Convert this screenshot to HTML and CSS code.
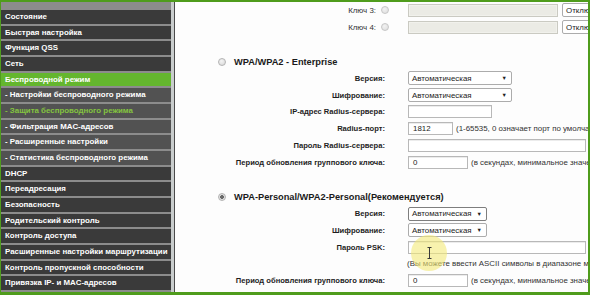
FILE: index.html
```html
<!DOCTYPE html>
<html lang="ru">
<head>
<meta charset="utf-8">
<title>Защита беспроводного режима</title>
<link rel="stylesheet" href="styles.css">
</head>
<body>
<div class="frame">
  <nav class="menu">
    <div class="item">Состояние</div>
    <div class="item">Быстрая настройка</div>
    <div class="item">Функция QSS</div>
    <div class="item">Сеть</div>
    <div class="item active">Беспроводной режим</div>
    <div class="item sub">- Настройки беспроводного режима</div>
    <div class="item sub current">- Защита беспроводного режима</div>
    <div class="item sub">- Фильтрация MAC-адресов</div>
    <div class="item sub">- Расширенные настройки</div>
    <div class="item sub">- Статистика беспроводного режима</div>
    <div class="item">DHCP</div>
    <div class="item">Переадресация</div>
    <div class="item">Безопасность</div>
    <div class="item">Родительский контроль</div>
    <div class="item">Контроль доступа</div>
    <div class="item">Расширенные настройки маршрутизации</div>
    <div class="item">Контроль пропускной способности</div>
    <div class="item">Привязка IP- и MAC-адресов</div>
    <div class="item">Динамический DNS</div>
  </nav>
  <div class="divider"></div>
  <main class="content">
    <section class="block">
      <div class="row">
        <div class="label key">Ключ 3: <span class="radio off"></span></div>
        <div class="field"><span class="input disabled w150"></span><span class="select sel-key"><span>Отключено</span></span></div>
      </div>
      <div class="row">
        <div class="label key">Ключ 4: <span class="radio off"></span></div>
        <div class="field"><span class="input disabled w150"></span><span class="select sel-key"><span>Отключено</span></span></div>
      </div>
    </section>

    <section class="block gap">
      <div class="heading"><span class="radio"></span><span>WPA/WPA2 - Enterprise</span></div>
      <div class="row">
        <div class="label">Версия:</div>
        <div class="field"><span class="select w104"><span>Автоматическая</span><span class="arrow">▼</span></span></div>
      </div>
      <div class="row">
        <div class="label">Шифрование:</div>
        <div class="field"><span class="select w104"><span>Автоматическая</span><span class="arrow">▼</span></span></div>
      </div>
      <div class="row">
        <div class="label">IP-адрес Radius-сервера:</div>
        <div class="field"><span class="input w84"></span></div>
      </div>
      <div class="row">
        <div class="label">Radius-порт:</div>
        <div class="field"><span class="input w45">1812</span><span class="hint">(1-65535, 0 означает порт по умолчанию 1812)</span></div>
      </div>
      <div class="row">
        <div class="label">Пароль Radius-сервера:</div>
        <div class="field"><span class="input wide"></span></div>
      </div>
      <div class="row">
        <div class="label">Период обновления группового ключа:</div>
        <div class="field"><span class="input w60">0</span><span class="hint">(в секундах, минимальное значение 30, 0 - без обновления)</span></div>
      </div>
    </section>

    <section class="block gap">
      <div class="heading"><span class="radio on"></span><span>WPA-Personal/WPA2-Personal(Рекомендуется)</span></div>
      <div class="row">
        <div class="label">Версия:</div>
        <div class="field"><span class="select w79 focus"><span>Автоматическая</span><span class="arrow">▼</span></span></div>
      </div>
      <div class="row">
        <div class="label">Шифрование:</div>
        <div class="field"><span class="select w79"><span>Автоматическая</span><span class="arrow">▼</span></span></div>
      </div>
      <div class="row">
        <div class="label">Пароль PSK:</div>
        <div class="field"><span class="input wide"></span></div>
      </div>
      <div class="row">
        <div class="label"></div>
        <div class="field"><span class="hint note">(Вы можете ввести ASCII символы в диапазоне между 8 и 63 или шестнадцатеричные символы)</span></div>
      </div>
      <div class="row">
        <div class="label">Период обновления группового ключа:</div>
        <div class="field"><span class="input w60">0</span><span class="hint">(в секундах, минимальное значение 30, 0 - без обновления)</span></div>
      </div>
    </section>

    <div class="cursor">
      <svg class="ibeam" width="7" height="12" viewBox="0 0 7 12"><path d="M1.5 0.5h4M3.5 0.5v11M1.5 11.5h4" stroke="#3a3a3a" stroke-width="1" fill="none"/></svg>
    </div>
  </main>
</div>
</body>
</html>
```

FILE: styles.css
```css
* { box-sizing: border-box; }

html, body {
  margin: 0;
  padding: 0;
  width: 590px;
  height: 295px;
  overflow: hidden;
  background: #ffffff;
  font-family: "Liberation Sans", Arial, sans-serif;
}

.frame {
  display: flex;
  width: 590px;
  height: 295px;
  border-style: solid;
  border-color: #4f9c1c;
  border-width: 2px 2px 3px 1px;
  overflow: hidden;
}

.menu {
  flex: 0 0 170px;
  display: flex;
  flex-direction: column;
  gap: 2px;
  padding-top: 8px;
  background: #8c8c8c;
  overflow: hidden;
}

.item {
  flex: 0 0 13.66px;
  height: 13.66px;
  line-height: 13.66px;
  padding-left: 4px;
  background: #3a3a3a;
  color: #ffffff;
  font-size: 7.9px;
  font-weight: bold;
  white-space: nowrap;
  overflow: hidden;
}

.item.sub { background: #525252; }
.item.active { background: #64b62e; }
.item.current { color: #84c440; }

.divider {
  flex: 0 0 4px;
  background: #c9cdcd;
  border-right: 1px solid #4a4a4a;
}

.content {
  flex: 1 1 auto;
  position: relative;
  background: #fdfdfd;
  overflow: hidden;
  color: #222222;
  font-size: 7.9px;
}

.block.gap { margin-top: 17.6px; }

.row {
  display: grid;
  grid-template-columns: 210px 1fr;
  column-gap: 23px;
  align-items: center;
  height: 16.8px;
}

.label {
  text-align: right;
  font-size: 7.6px;
  font-weight: bold;
  white-space: nowrap;
  color: #1e1e1e;
}

.label.key {
  display: flex;
  justify-content: flex-end;
  align-items: center;
  gap: 5px;
  font-size: 7.9px;
  font-weight: normal;
  color: #333333;
}

.label.key .radio { margin-right: -4px; }

.field {
  display: flex;
  align-items: center;
  gap: 3px;
  white-space: nowrap;
}

.heading {
  display: flex;
  align-items: center;
  gap: 8px;
  height: 16.8px;
  padding-left: 43px;
  font-size: 9.25px;
  font-weight: bold;
  color: #1a1a1a;
  white-space: nowrap;
}

.radio {
  flex: 0 0 8px;
  width: 8px;
  height: 8px;
  border-radius: 50%;
  border: 1px solid #b4b4b4;
  background: radial-gradient(circle at 40% 35%, #f4f4f4, #d6d6d6);
}

.radio.off {
  border-color: #c6c6c6;
  background: radial-gradient(circle at 40% 35%, #f2f2f2, #dcdcdc);
}

.radio.on {
  background: radial-gradient(circle, #6a6a6a 0 1.6px, #e6e6e6 2.2px, #d0d0d0);
}

.input {
  flex: 0 0 auto;
  display: inline-block;
  height: 13px;
  line-height: 11px;
  padding-left: 4px;
  border: 1px solid #b8b8b8;
  background: #ffffff;
  color: #222222;
  box-shadow: inset 0 1px 0 #ececec;
}

.input.disabled {
  background: #ebebe5;
  border-color: #cacac2;
  box-shadow: inset 0 0 0 1px #f1f1ec;
}

.w150 { width: 150px; }
.w84 { width: 84px; }
.w45 { width: 45px; }
.w60 { width: 60px; }
.wide { width: 178px; }

.select {
  flex: 0 0 auto;
  display: inline-flex;
  justify-content: space-between;
  align-items: center;
  height: 14px;
  padding: 0 4px 0 3px;
  border: 1px solid #acacac;
  border-radius: 2px;
  background: #ffffff;
  color: #222222;
}

.select.focus { border-color: #7e7e7e; }

.w104 { width: 104px; }
.w79 { width: 79px; }

.sel-key {
  width: 60px;
  margin-left: 1px;
  justify-content: flex-start;
}

.arrow {
  font-size: 5.5px;
  color: #222222;
}

.hint {
  color: #333333;
}

.hint.note { margin-left: -1px; }

.cursor {
  position: absolute;
  left: 236px;
  top: 233px;
  width: 36px;
  height: 36px;
  border-radius: 50%;
  background: rgba(243, 234, 120, 0.6);
  display: flex;
  align-items: center;
  justify-content: center;
}
```
